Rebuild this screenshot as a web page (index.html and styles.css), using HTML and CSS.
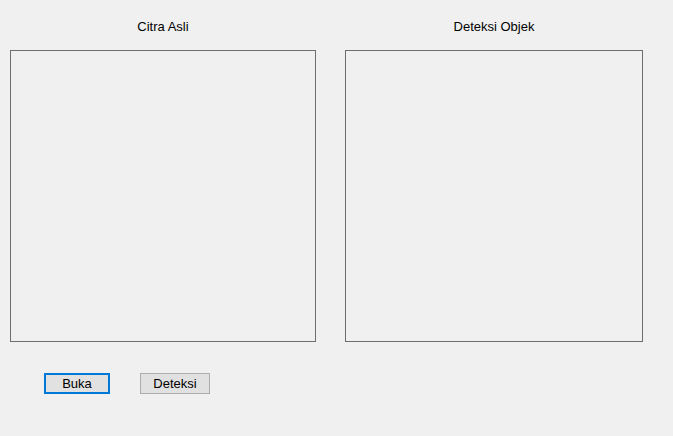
FILE: index.html
```html
<!DOCTYPE html>
<html>
<head>
<meta charset="utf-8">
<link rel="stylesheet" href="styles.css">
</head>
<body>
<div class="form">
  <div class="panels">
    <div class="col col-left">
      <div class="label">Citra Asli</div>
      <div class="picture"></div>
    </div>
    <div class="col col-right">
      <div class="label">Deteksi Objek</div>
      <div class="picture"></div>
    </div>
  </div>
  <div class="buttons">
    <button class="btn btn-default">Buka</button>
    <button class="btn btn-detect">Deteksi</button>
  </div>
</div>
</body>
</html>
```
FILE: styles.css
```css
html, body {
  margin: 0;
  padding: 0;
  background: #f0f0f0;
}
.form {
  width: 673px;
  height: 436px;
  font-family: "Liberation Sans", Arial, sans-serif;
  font-size: 13px;
  color: #000;
}
.panels {
  display: flex;
  padding-left: 10px;
  gap: 29px;
}
.col {
  display: flex;
  flex-direction: column;
}
.col-left { width: 306px; }
.col-right { width: 298px; }
.label {
  height: 50px;
  box-sizing: border-box;
  padding-top: 19px;
  line-height: 15px;
  text-align: center;
}
.picture {
  height: 292px;
  box-sizing: border-box;
  border: 1px solid #6e6e6e;
}
.buttons {
  display: flex;
  margin-top: 31px;
  padding-left: 44px;
  gap: 30px;
}
.btn {
  box-sizing: border-box;
  height: 21px;
  margin: 0;
  padding: 0;
  background: #e1e1e1;
  border: 1px solid #adadad;
  font-family: "Liberation Sans", Arial, sans-serif;
  font-size: 13px;
  color: #000;
}
.btn-default {
  width: 66px;
  border: 2px solid #0078d7;
}
.btn-detect {
  width: 70px;
}
```
